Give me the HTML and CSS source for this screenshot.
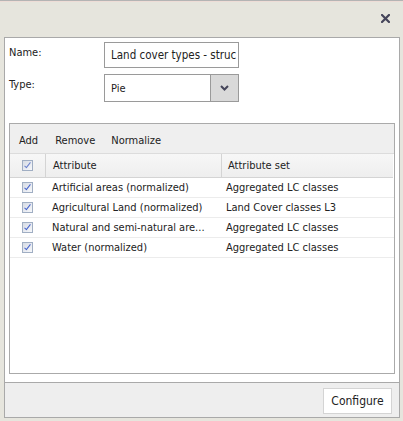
FILE: index.html
```html
<!DOCTYPE html>
<html>
<head>
<meta charset="utf-8">
<link rel="stylesheet" href="styles.css">
</head>
<body>
<div class="dialog">
  <div class="titlebar">
    <svg class="close" width="9" height="9" viewBox="0 0 9 9"><path d="M1 1 L8 8 M8 1 L1 8" stroke="#45455a" stroke-width="2.2" stroke-linecap="square"/></svg>
  </div>
  <div class="panel">
    <div class="content">
      <div class="form-row">
        <label class="lbl">Name:</label>
        <div class="input">Land cover types - struc</div>
      </div>
      <div class="form-row">
        <label class="lbl">Type:</label>
        <div class="select">
          <span class="sel-text">Pie</span>
          <span class="sel-btn"><svg width="9" height="6" viewBox="0 0 9 6"><path d="M1 1 L4.5 4.5 L8 1" fill="none" stroke="#45455a" stroke-width="2"/></svg></span>
        </div>
      </div>
      <div class="grid">
        <div class="toolbar">
          <span class="t-add">Add</span><span class="t-rem">Remove</span><span>Normalize</span>
        </div>
        <div class="header">
          <div class="c-chk"><span class="cb cb-h"></span></div>
          <div class="c-attr">Attribute</div>
          <div class="c-set">Attribute set</div>
        </div>
        <div class="row">
          <div class="c-chk"><span class="cb"></span></div>
          <div class="c-attr">Artificial areas (normalized)</div>
          <div class="c-set">Aggregated LC classes</div>
        </div>
        <div class="row">
          <div class="c-chk"><span class="cb"></span></div>
          <div class="c-attr">Agricultural Land (normalized)</div>
          <div class="c-set">Land Cover classes L3</div>
        </div>
        <div class="row">
          <div class="c-chk"><span class="cb"></span></div>
          <div class="c-attr">Natural and semi-natural are...</div>
          <div class="c-set">Aggregated LC classes</div>
        </div>
        <div class="row">
          <div class="c-chk"><span class="cb"></span></div>
          <div class="c-attr">Water (normalized)</div>
          <div class="c-set">Aggregated LC classes</div>
        </div>
      </div>
    </div>
    <div class="footer">
      <button class="btn">Configure</button>
    </div>
  </div>
</div>
</body>
</html>
```
FILE: styles.css
```css
html, body {
  margin: 0;
  padding: 0;
}
body {
  width: 403px;
  height: 421px;
  background: #e6e5dd;
  font-family: "DejaVu Sans Condensed", "DejaVu Sans", Verdana, sans-serif;
  font-stretch: condensed;
  font-size: 11px;
  color: #222;
  overflow: hidden;
}
.dialog {
  height: 421px;
  box-sizing: border-box;
  border-top: 1px solid #b4b4b4;
  box-shadow: inset 0 1px 0 #eedcd6;
  display: flex;
  flex-direction: column;
}
.titlebar {
  height: 36px;
  display: flex;
  justify-content: flex-end;
  align-items: flex-start;
}
.close {
  margin-top: 13px;
  margin-right: 13px;
}
.panel {
  margin: 0 3px 3px 4px;
  border: 1px solid #a9a9a9;
  height: 382px;
  box-sizing: border-box;
  display: flex;
  flex-direction: column;
  background: #fff;
}
.content {
  flex: 1;
  padding: 4px 4px 8px 4px;
  display: flex;
  flex-direction: column;
}
.form-row {
  display: flex;
  align-items: flex-start;
  margin-bottom: 6px;
}
.lbl {
  width: 95px;
  padding-top: 4px;
}
.input {
  width: 127px;
  height: 24px;
  border: 1px solid #9a9a9a;
  line-height: 25px;
  padding-left: 6px;
  font-size: 11.5px;
  white-space: nowrap;
  overflow: hidden;
}
.select {
  width: 133px;
  height: 26px;
  border: 1px solid #9a9a9a;
  display: flex;
}
.sel-text {
  flex: 1;
  padding-left: 6px;
  line-height: 27px;
}
.sel-btn {
  width: 27px;
  background: #d9d9d9;
  border-left: 1px solid #9a9a9a;
  display: flex;
  align-items: center;
  justify-content: center;
}
.grid {
  margin-top: 15px;
  flex: 1;
  border: 1px solid #aaaaaa;
}
.toolbar {
  height: 30px;
  background: #efefef;
  display: flex;
  align-items: center;
  padding-left: 9px;
  padding-top: 4px;
  box-sizing: border-box;
  border-bottom: 1px solid #dcdcdc;
}
.t-add { margin-right: 17px; }
.t-rem { margin-right: 16px; }
.header, .row {
  display: flex;
  align-items: center;
}
.header {
  height: 23px;
  background: linear-gradient(#f7f7f7, #eeeeee);
  border-bottom: 1px solid #d4d4d4;
  margin-right: 1px;
}
.row {
  height: 18px;
  border-bottom: 1px solid #ececec;
  padding-top: 1px;
  box-sizing: content-box;
}
.row .c-chk { margin-top: -1px; }
.c-chk {
  width: 35px;
  display: flex;
  justify-content: center;
  align-self: stretch;
  align-items: center;
}
.c-attr {
  width: 168px;
  padding-left: 7px;
  white-space: nowrap;
  overflow: hidden;
  align-self: stretch;
  display: flex;
  align-items: center;
}
.c-set {
  flex: 1;
  padding-left: 6px;
  white-space: nowrap;
  align-self: stretch;
  display: flex;
  align-items: center;
}
.header .c-chk, .header .c-attr {
  border-right: 1px solid #d4d4d4;
}
.cb {
  width: 9px;
  height: 9px;
  border: 1px solid #a0aec3;
  background: linear-gradient(135deg, #d6dbe4, #f7f8fb);
  position: relative;
}
.cb::after {
  content: "";
  position: absolute;
  left: 3px;
  top: 0px;
  width: 2px;
  height: 6px;
  border-right: 1.6px solid #4563cc;
  border-bottom: 1.6px solid #4563cc;
  transform: rotate(38deg);
}
.cb-h::after {
  border-color: #6a80cc;
}
.footer {
  height: 34px;
  background: #eeeeee;
  border-top: 1px solid #a9a9a9;
  display: flex;
  justify-content: flex-end;
  align-items: center;
  padding-right: 7px;
}
.btn {
  font-family: inherit;
  font-stretch: condensed;
  font-size: 12px;
  color: #222;
  background: #fff;
  border: 1px solid #d4d4d4;
  height: 26px;
  width: 69px;
  padding: 0;
  margin-top: 2px;
}
```
